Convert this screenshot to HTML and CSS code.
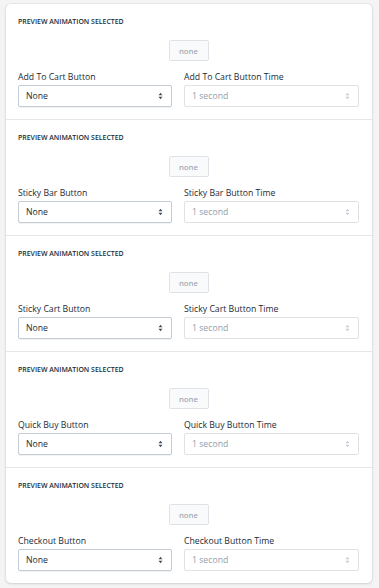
FILE: index.html
```html
<!DOCTYPE html>
<html lang="en">
<head>
    <meta charset="UTF-8">
    <meta name="viewport" content="width=device-width, initial-scale=1.0">
    <title>Button Animations</title>
    <link rel="stylesheet" href="styles.css">
</head>
<body>
    <div class="card">
        <div class="section">
            <h3>Preview animation selected</h3>
            <div class="preview"><button class="preview-btn">none</button></div>
            <div class="fields">
                <div class="field field-main">
                    <label>Add To Cart Button</label>
                    <div class="select"><span>None</span><svg class="arrows" viewBox="0 0 6 10"><path d="M3 1 L5.5 4 H0.5 Z M3 9 L0.5 6 H5.5 Z"/></svg></div>
                </div>
                <div class="field field-time">
                    <label>Add To Cart Button Time</label>
                    <div class="select disabled"><span>1 second</span><svg class="arrows" viewBox="0 0 6 10"><path d="M3 1 L5.5 4 H0.5 Z M3 9 L0.5 6 H5.5 Z"/></svg></div>
                </div>
            </div>
        </div>

        <div class="section">
            <h3>Preview animation selected</h3>
            <div class="preview"><button class="preview-btn">none</button></div>
            <div class="fields">
                <div class="field field-main">
                    <label>Sticky Bar Button</label>
                    <div class="select"><span>None</span><svg class="arrows" viewBox="0 0 6 10"><path d="M3 1 L5.5 4 H0.5 Z M3 9 L0.5 6 H5.5 Z"/></svg></div>
                </div>
                <div class="field field-time">
                    <label>Sticky Bar Button Time</label>
                    <div class="select disabled"><span>1 second</span><svg class="arrows" viewBox="0 0 6 10"><path d="M3 1 L5.5 4 H0.5 Z M3 9 L0.5 6 H5.5 Z"/></svg></div>
                </div>
            </div>
        </div>

        <div class="section">
            <h3>Preview animation selected</h3>
            <div class="preview"><button class="preview-btn">none</button></div>
            <div class="fields">
                <div class="field field-main">
                    <label>Sticky Cart Button</label>
                    <div class="select"><span>None</span><svg class="arrows" viewBox="0 0 6 10"><path d="M3 1 L5.5 4 H0.5 Z M3 9 L0.5 6 H5.5 Z"/></svg></div>
                </div>
                <div class="field field-time">
                    <label>Sticky Cart Button Time</label>
                    <div class="select disabled"><span>1 second</span><svg class="arrows" viewBox="0 0 6 10"><path d="M3 1 L5.5 4 H0.5 Z M3 9 L0.5 6 H5.5 Z"/></svg></div>
                </div>
            </div>
        </div>

        <div class="section">
            <h3>Preview animation selected</h3>
            <div class="preview"><button class="preview-btn">none</button></div>
            <div class="fields">
                <div class="field field-main">
                    <label>Quick Buy Button</label>
                    <div class="select"><span>None</span><svg class="arrows" viewBox="0 0 6 10"><path d="M3 1 L5.5 4 H0.5 Z M3 9 L0.5 6 H5.5 Z"/></svg></div>
                </div>
                <div class="field field-time">
                    <label>Quick Buy Button Time</label>
                    <div class="select disabled"><span>1 second</span><svg class="arrows" viewBox="0 0 6 10"><path d="M3 1 L5.5 4 H0.5 Z M3 9 L0.5 6 H5.5 Z"/></svg></div>
                </div>
            </div>
        </div>

        <div class="section">
            <h3>Preview animation selected</h3>
            <div class="preview"><button class="preview-btn">none</button></div>
            <div class="fields">
                <div class="field field-main">
                    <label>Checkout Button</label>
                    <div class="select"><span>None</span><svg class="arrows" viewBox="0 0 6 10"><path d="M3 1 L5.5 4 H0.5 Z M3 9 L0.5 6 H5.5 Z"/></svg></div>
                </div>
                <div class="field field-time">
                    <label>Checkout Button Time</label>
                    <div class="select disabled"><span>1 second</span><svg class="arrows" viewBox="0 0 6 10"><path d="M3 1 L5.5 4 H0.5 Z M3 9 L0.5 6 H5.5 Z"/></svg></div>
                </div>
            </div>
        </div>
    </div>
</body>
</html>
```

FILE: styles.css
```css
body {
    margin: 0;
    padding: 4px 7px 6px 6px;
    background: #f4f4f4;
    font-family: 'Open Sans', 'Noto Sans', sans-serif;
    color: #212b36;
}
.card {
    background: #fff;
    border-radius: 5px;
    box-shadow: 0 0 0 1px rgba(63, 63, 68, 0.05), 0 1px 3px rgba(63, 63, 68, 0.15);
}
.section {
    padding: 12px 13px 12px 12px;
    border-top: 1px solid #e4e6e8;
}
.section:first-child {
    border-top: none;
}
.section h3 {
    margin: 0;
    font-size: 6.95px;
    line-height: 12px;
    font-weight: 600;
    text-transform: uppercase;
    color: #212b36;
}
.preview {
    display: flex;
    justify-content: center;
    margin-top: 12px;
}
.preview-btn {
    width: 40px;
    height: 21px;
    padding: 0;
    font-family: inherit;
    font-size: 7.8px;
    font-weight: 600;
    color: #a3acb5;
    background: #f9fafb;
    border: 1px solid #dfe3e8;
    border-radius: 2px;
}
.fields {
    display: flex;
    gap: 12px;
    margin-top: 10px;
}
.field-main {
    width: 154px;
}
.field-time {
    flex: 1;
}
.field label {
    display: block;
    font-size: 8.7px;
    line-height: 12px;
    color: #212b36;
    margin-bottom: 2px;
}
.select {
    height: 22px;
    box-sizing: border-box;
    display: flex;
    align-items: center;
    justify-content: space-between;
    padding: 0 8px 0 7px;
    font-size: 8.7px;
    border: 1px solid #c4cdd5;
    border-radius: 2px;
    box-shadow: 0 1px 0 rgba(22, 29, 37, 0.05);
    background: #fff;
}
.select .arrows {
    width: 5px;
    height: 8px;
    fill: #454f5b;
}
.select.disabled {
    color: #919eab;
    border-color: #dfe3e8;
    box-shadow: none;
}
.select.disabled .arrows {
    fill: #c4cdd5;
}
```
